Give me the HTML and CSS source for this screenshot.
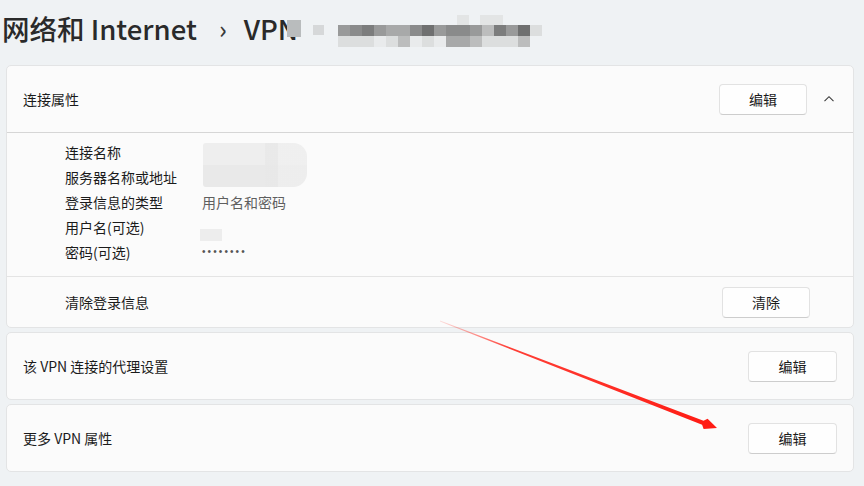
FILE: index.html
```html
<!DOCTYPE html>
<html lang="zh-CN">
<head>
    <meta charset="utf-8">
    <title>VPN 属性</title>
    <link rel="stylesheet" href="styles.css">
</head>
<body>

<div class="page">

    <div class="crumbs">
        <span class="crumb">网络和 Internet</span>
        <span class="sep">&#x203A;</span>
        <span class="crumb">VPN</span>
        <div class="mosaic-title">
            <div class="mt-dot"></div>
            <div class="mt-dot2"></div>
            <div class="mt-top"></div>
            <div class="mt-top mt-top2"></div>
            <div class="mt-grid">
                <i class="g3"></i><i class="g4"></i><i class="g5"></i><i class="g3"></i><i class="g2"></i><i class="g2"></i><i class="g4"></i><i class="g6"></i><i class="g3"></i><i class="g4"></i><i class="g4"></i><i class="g3"></i><i class="g1"></i><i class="g5"></i><i class="g3"></i><i class="g6"></i><i class="g0"></i>
                <i class="g0"></i><i class="g0"></i><i class="g0"></i><i class="gw"></i><i class="g0"></i><i class="g1"></i><i class="gw"></i><i class="g0"></i><i class="gw"></i><i class="g2"></i><i class="g2"></i><i class="g1"></i><i class="g0"></i><i class="g0"></i><i class="g0"></i><i class="g1"></i><i class="gn"></i>
            </div>
        </div>
    </div>

    <div class="card">
        <div class="row head">
            <span class="row-label">连接属性</span>
            <button class="btn">编辑</button>
            <span class="chevron">
                <svg width="12" height="12" viewBox="0 0 12 12"><path d="M1.5 8.2 L6 3.7 L10.5 8.2" fill="none" stroke="#3a3a3a" stroke-width="1.1"/></svg>
            </span>
        </div>
        <div class="details">
            <div class="detail">
                <span class="key">连接名称</span>
                <span class="val"></span>
            </div>
            <div class="detail">
                <span class="key">服务器名称或地址</span>
                <span class="val"></span>
            </div>
            <div class="detail">
                <span class="key">登录信息的类型</span>
                <span class="val">用户名和密码</span>
            </div>
            <div class="detail">
                <span class="key">用户名(可选)</span>
                <span class="val"></span>
            </div>
            <div class="detail">
                <span class="key">密码(可选)</span>
                <span class="val dots">&bull;&bull;&bull;&bull;&bull;&bull;&bull;&bull;</span>
            </div>
            <div class="blur-name"></div>
            <div class="blur-user"></div>
        </div>
        <div class="row sub">
            <span class="row-label">清除登录信息</span>
            <button class="btn">清除</button>
        </div>
    </div>

    <div class="card">
        <div class="row">
            <span class="row-label">该 VPN 连接的代理设置</span>
            <button class="btn">编辑</button>
        </div>
    </div>

    <div class="card">
        <div class="row">
            <span class="row-label">更多 VPN 属性</span>
            <button class="btn">编辑</button>
        </div>
    </div>

</div>

<svg class="arrow" width="864" height="486" viewBox="0 0 864 486">
    <defs>
        <linearGradient id="fade" x1="440" y1="321" x2="717" y2="428" gradientUnits="userSpaceOnUse">
            <stop offset="0" stop-color="#ff3b30" stop-opacity="0.15"/>
            <stop offset="0.25" stop-color="#ff2a20" stop-opacity="0.9"/>
            <stop offset="1" stop-color="#ff1a12"/>
        </linearGradient>
    </defs>
    <polygon points="440,320.6 703.5,420.7 707.6,418.8 717,428 703.6,429 702.1,424.7 440,321.4" fill="url(#fade)"/>
</svg>

</body>
</html>
```

FILE: styles.css
```css
html, body {
    margin: 0;
    padding: 0;
}

body {
    width: 864px;
    height: 486px;
    overflow: hidden;
    position: relative;
    background: #eff2f4;
    color: #1b1b1b;
    font-family: "Segoe UI", "Noto Sans CJK SC", "Noto Sans", sans-serif;
    font-size: 14px;
}

.page {
    padding: 0 10px 0 6px;
}

/* breadcrumb title */

.crumbs {
    position: relative;
    height: 65px;
    display: flex;
    align-items: center;
    padding-bottom: 10px;
    box-sizing: border-box;
    margin-left: -4px;
    font-size: 27.5px;
    font-weight: 500;
    color: #2a2a2a;
    white-space: nowrap;
}

.sep {
    font-size: 25px;
    margin: 0 17px 0 22px;
    color: #3a3a3a;
}

/* pixelated part of the title, laid over the text */
.mosaic-title {
    position: absolute;
    left: 283px;
    top: 0;
    width: 270px;
    height: 50px;
}

.mt-dot {
    position: absolute;
    left: 2px;
    top: 20px;
    width: 14px;
    height: 17px;
    background: #b9bcbd;
}

.mt-dot2 {
    position: absolute;
    left: 28px;
    top: 25px;
    width: 11px;
    height: 10px;
    background: #d6d8d9;
}

.mt-top {
    position: absolute;
    left: 172px;
    top: 15px;
    width: 12px;
    height: 10px;
    background: #e3e5e5;
}

.mt-top2 {
    left: 195px;
    width: 23px;
}

.mt-grid {
    position: absolute;
    left: 53px;
    top: 25px;
    display: grid;
    grid-template-columns: repeat(17, 12px);
    grid-auto-rows: 11px;
}

.mt-grid i { display: block; }
.gn { background: transparent; }
.gw { background: #e9ebec; }
.g0 { background: #dcdede; }
.g1 { background: #bcbdbd; }
.g2 { background: #a8a9a9; }
.g3 { background: #999a9a; }
.g4 { background: #8a8b8b; }
.g5 { background: #7c7d7d; }
.g6 { background: #6f7070; }

/* cards */

.card {
    background: #fbfbfb;
    border: 1px solid #e3e4e5;
    border-radius: 5px;
    margin-bottom: 4px;
    overflow: hidden;
}

.row {
    height: 66px;
    display: flex;
    align-items: center;
    padding: 0 16px;
}

.row-label {
    flex: 1;
}

.head {
    border-bottom: 1px solid #d6d6d6;
    padding-right: 0;
}

.chevron {
    width: 44px;
    display: flex;
    justify-content: center;
    padding-right: 2px;
}

.btn {
    width: 89px;
    height: 31px;
    background: #fefefe;
    border: 1px solid #e2e2e2;
    border-bottom-color: #cdcdcd;
    border-radius: 4px;
    font-family: inherit;
    font-size: 14px;
    color: #1b1b1b;
    padding: 0;
}

.details {
    position: relative;
    padding: 6px 0 12px 58px;
    border-bottom: 1px solid #e4e4e4;
}

.detail {
    height: 25px;
    display: flex;
    align-items: center;
}

.key {
    width: 137px;
}

.val {
    color: #5f5f5f;
}

.dots {
    font-family: "Liberation Sans", sans-serif;
    font-size: 10px;
    letter-spacing: 2.1px;
    color: #555;
}

.blur-name {
    position: absolute;
    left: 196px;
    top: 10px;
    width: 104px;
    height: 44px;
    border-radius: 3px 14px 14px 3px;
    background:
        linear-gradient(90deg, rgba(251,251,251,0) 0, rgba(251,251,251,0) 60%, rgba(232,232,232,0.8) 60%, rgba(232,232,232,0.8) 72%, rgba(240,240,240,0.6) 72%),
        linear-gradient(180deg, #eeeeee 0, #eeeeee 50%, #e9e9e9 50%);
}

.blur-user {
    position: absolute;
    left: 193px;
    top: 96px;
    width: 22px;
    height: 12px;
    background: #ededed;
}

.sub {
    height: 50px;
}

.sub .row-label {
    padding-left: 42px;
}

.sub .btn {
    margin-right: 27px;
    width: 88px;
}

.head .btn {
    width: 88px;
}

.arrow {
    position: absolute;
    left: 0;
    top: 0;
    pointer-events: none;
}
```
